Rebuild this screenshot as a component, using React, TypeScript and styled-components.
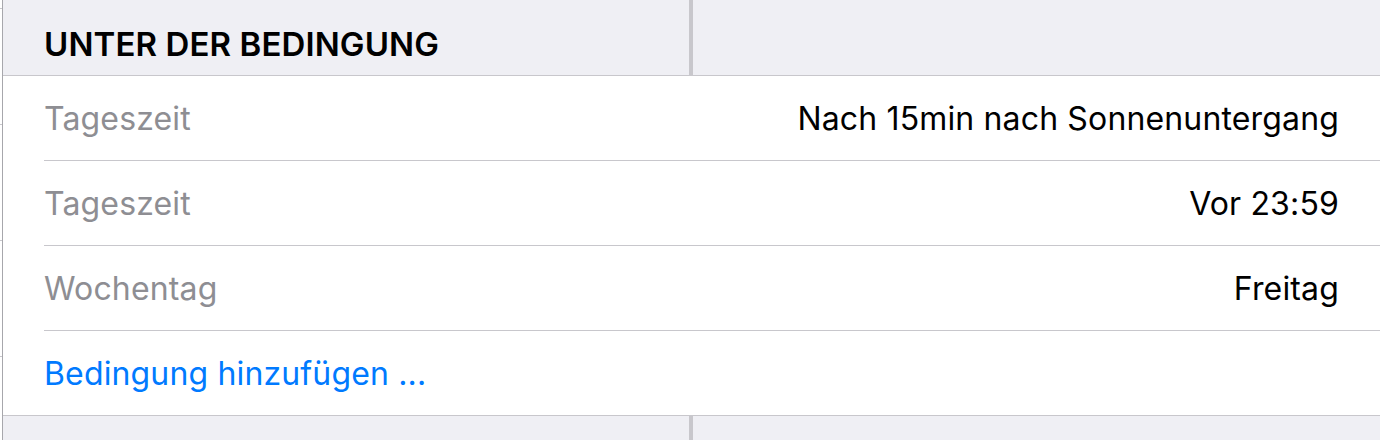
import React from 'react';
import styled, { createGlobalStyle } from 'styled-components';

const GlobalStyle = createGlobalStyle`
  html, body {
    margin: 0;
    padding: 0;
    background: #ffffff;
  }
  body {
    font-family: Inter, "Noto Sans", "Liberation Sans", sans-serif;
    -webkit-font-smoothing: antialiased;
  }
`;

const Page = styled.div`
  display: flex;
  width: 1380px;
  height: 440px;
  overflow: hidden;
  background: #efeff4;
`;

// sliver of the list that sits behind the panel on the left
const BackEdge = styled.div`
  width: 2px;
  flex-shrink: 0;
  background: repeating-linear-gradient(
    to bottom,
    #ffffff 0px,
    #ffffff 62px,
    #c8c7cc 62px,
    #c8c7cc 63px,
    #ffffff 63px,
    #ffffff 116px
  );
  background-position: 0 -54px;
  border-right: 1px solid #a7a7ac;
`;

const Panel = styled.div`
  flex: 1;
  display: flex;
  flex-direction: column;
  min-width: 0;
`;

const SplitBar = styled.div<{ height: number }>`
  display: flex;
  height: ${p => p.height}px;
  flex-shrink: 0;
  background: #efeff4;
`;

const SplitCell = styled.div<{ divider?: boolean }>`
  display: flex;
  align-items: flex-end;
  flex: ${p => (p.divider ? '0 0 686px' : '1')};
  border-right: ${p => (p.divider ? '4px solid #c8c7cc' : 'none')};
`;

const Title = styled.h2`
  margin: 0 0 12px 41px;
  font-size: 33px;
  line-height: 38px;
  font-weight: 600;
  letter-spacing: 0.1px;
  color: #000000;
`;

const List = styled.div`
  background: #ffffff;
  border-top: 1px solid #c8c7cc;
  border-bottom: 1px solid #c8c7cc;
`;

const Row = styled.div<{ last?: boolean }>`
  display: flex;
  align-items: center;
  justify-content: space-between;
  height: 84px;
  margin-left: 41px;
  padding: 0 41px 0 0;
  border-bottom: ${p => (p.last ? 'none' : '1px solid #c8c7cc')};
  font-size: 32px;
  letter-spacing: 0.15px;
`;

const Label = styled.span`
  color: #8e8e93;
`;

const Value = styled.span`
  color: #000000;
`;

const Action = styled.span`
  color: #007aff;
`;

const conditions = [
  { label: 'Tageszeit', value: 'Nach 15min nach Sonnenuntergang' },
  { label: 'Tageszeit', value: 'Vor 23:59' },
  { label: 'Wochentag', value: 'Freitag' }
];

const App = () => {
  return (
    <>
      <GlobalStyle />
      <Page>
        <BackEdge />
        <Panel>
          <SplitBar height={75}>
            <SplitCell divider>
              <Title>UNTER DER BEDINGUNG</Title>
            </SplitCell>
            <SplitCell />
          </SplitBar>
          <List>
            {conditions.map((c, i) => (
              <Row key={i}>
                <Label>{c.label}</Label>
                <Value>{c.value}</Value>
              </Row>
            ))}
            <Row last>
              <Action>Bedingung hinzufügen ...</Action>
            </Row>
          </List>
          <SplitBar height={40}>
            <SplitCell divider />
            <SplitCell />
          </SplitBar>
        </Panel>
      </Page>
    </>
  );
};

export default App;
